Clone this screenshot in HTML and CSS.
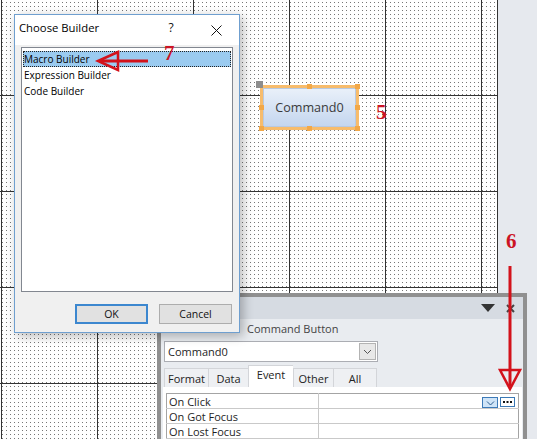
FILE: index.html
```html
<!DOCTYPE html>
<html lang="en">
<head>
<meta charset="utf-8">
<title>Choose Builder</title>
<link rel="stylesheet" href="styles.css">
</head>
<body>
<div class="screen">
  <div class="canvas"></div>

  <div class="ctl">
    <div class="ctl-frame"><div class="ctl-btn">Command0</div></div>
    <span class="move-handle"></span>
    <span class="h h-tm"></span>
    <span class="h h-tr"></span>
    <span class="h h-ml"></span>
    <span class="h h-mr"></span>
    <span class="h h-bl"></span>
    <span class="h h-bm"></span>
    <span class="h h-br"></span>
  </div>

  <div class="props">
    <div class="props-head">
      <svg class="props-menu" width="14" height="8" viewBox="0 0 14 8"><polygon points="0,0 14,0 7,8" fill="#333"/></svg>
      <svg class="props-close" width="9" height="9" viewBox="0 0 9 9"><path d="M1 1 L8 8 M8 1 L1 8" stroke="#444" stroke-width="2"/></svg>
    </div>
    <div class="seltype"><span class="seltype-label"></span>Command Button</div>
    <div class="combo">
      <span class="combo-text">Command0</span>
      <span class="combo-btn"><svg width="9" height="6" viewBox="0 0 9 6"><path d="M1 1 L4.5 4.5 L8 1" fill="none" stroke="#555" stroke-width="1"/></svg></span>
    </div>
    <div class="tabs">
      <span class="tab tab-format">Format</span>
      <span class="tab tab-data">Data</span>
      <span class="tab tab-event active">Event</span>
      <span class="tab tab-other">Other</span>
      <span class="tab tab-all">All</span>
    </div>
    <div class="tabpage">
      <table class="grid">
        <tr>
          <td class="name">On Click</td>
          <td class="value">
            <span class="cell-tools">
              <span class="mini-drop"><svg width="9" height="5" viewBox="0 0 9 5"><path d="M1 0.5 L4.5 4 L8 0.5" fill="none" stroke="#2c5d8f" stroke-width="1"/></svg></span>
              <span class="mini-dots"><svg width="9" height="2" viewBox="0 0 9 2"><rect x="0" y="0" width="2" height="2" fill="#111"/><rect x="3.5" y="0" width="2" height="2" fill="#111"/><rect x="7" y="0" width="2" height="2" fill="#111"/></svg></span>
            </span>
          </td>
        </tr>
        <tr><td class="name">On Got Focus</td><td class="value"></td></tr>
        <tr><td class="name">On Lost Focus</td><td class="value"></td></tr>
      </table>
    </div>
  </div>

  <div class="dialog">
    <div class="dlg-title">
      <span class="dlg-caption">Choose Builder</span>
      <span class="dlg-help">?</span>
      <span class="dlg-close"><svg width="11" height="11" viewBox="0 0 11 11"><path d="M0.5 0.5 L10.5 10.5 M10.5 0.5 L0.5 10.5" stroke="#111" stroke-width="1"/></svg></span>
    </div>
    <div class="dlg-body">
      <div class="listbox">
        <div class="item selected">Macro Builder</div>
        <div class="item">Expression Builder</div>
        <div class="item">Code Builder</div>
      </div>
      <div class="dlg-buttons">
        <button class="btn default">OK</button>
        <button class="btn">Cancel</button>
      </div>
    </div>
  </div>

  <svg class="marks" width="537" height="439" viewBox="0 0 537 439">
    <g fill="none" stroke="#d3121b" stroke-linejoin="miter">
      <line x1="101" y1="61" x2="148" y2="61" stroke-width="3"/>
      <polygon points="98,61 118,52 118,70" stroke-width="2.5"/>
      <line x1="510" y1="266" x2="510" y2="386" stroke-width="3"/>
      <polygon points="500,370 520,370 510,389" stroke-width="2.5"/>
    </g>
    <g class="digits" fill="#cc1424">
      <text x="164" y="60">7</text>
      <text x="376" y="119">5</text>
      <text x="506" y="248">6</text>
    </g>
  </svg>
</div>
</body>
</html>
```

FILE: styles.css
```css
* { box-sizing: border-box; }

html, body {
  margin: 0;
  padding: 0;
}

body {
  width: 537px;
  height: 439px;
  overflow: hidden;
  font-family: "Open Sans", "Noto Sans", sans-serif;
  color: #111;
}

.screen {
  position: relative;
  width: 537px;
  height: 439px;
  overflow: hidden;
  background: #e6e9ee;
}

/* design surface */
.canvas {
  position: absolute;
  left: 0;
  top: 0;
  width: 498px;
  height: 439px;
  border-right: 1px solid #333;
  background-color: #fff;
  background-image:
    linear-gradient(90deg, #333 1px, transparent 1px),
    linear-gradient(#333 1px, transparent 1px),
    conic-gradient(at 1px 1px, transparent 75%, #777 0);
  background-size: 96px 96px, 96px 96px, 4px 4px;
  background-position: 1px 0, 0 95px, 2px 2px;
}

/* command button control on the canvas */
.ctl {
  position: absolute;
  left: 260px;
  top: 85px;
  width: 99px;
  height: 45px;
}

.ctl-frame {
  width: 100%;
  height: 100%;
  border: 3px solid #f7bc6c;
}

.ctl-btn {
  width: 100%;
  height: 100%;
  border: 1px solid #b9c9df;
  background: linear-gradient(#e9f0f9, #c4d6ef);
  color: #3a3a3a;
  font-size: 12.6px;
  display: flex;
  align-items: center;
  justify-content: center;
}

.move-handle {
  position: absolute;
  left: -4px;
  top: -4px;
  width: 7px;
  height: 7px;
  background: #8d8d8d;
}

.h {
  position: absolute;
  width: 5px;
  height: 5px;
  background: #f2a848;
}
.h-tm { left: 47px; top: -1px; }
.h-tr { left: 95px; top: -1px; }
.h-ml { left: -1px; top: 20px; }
.h-mr { left: 95px; top: 20px; }
.h-bl { left: -1px; top: 41px; }
.h-bm { left: 47px; top: 41px; }
.h-br { left: 95px; top: 41px; }

/* property sheet */
.props {
  position: absolute;
  left: 157px;
  top: 293px;
  width: 370px;
  height: 160px;
  border: 4px solid #909090;
  border-bottom: 0;
  background: #e9ecf0;
  font-size: 11px;
  color: #1e1e1e;
}

.props-head {
  height: 22px;
  background: #d6dbe2;
  display: flex;
  align-items: center;
  padding: 0 8px 0 2px;
}

.props-menu { margin-left: auto; margin-right: 11px; }

.seltype {
  height: 22px;
  line-height: 20px;
  padding-left: 2px;
  color: #444;
}

.seltype-label {
  display: inline-block;
  width: 84px;
}

.combo {
  margin-left: 3px;
  width: 214px;
  height: 21px;
  border: 1px solid #abadb3;
  background: #fff;
  display: flex;
  align-items: center;
}

.combo-text {
  flex: 1;
  padding-left: 3px;
}

.combo-btn {
  width: 17px;
  height: 17px;
  margin-right: 1px;
  border: 1px solid #b3b3b3;
  background: #e8e8e8;
  display: flex;
  align-items: center;
  justify-content: center;
}

.tabs {
  display: flex;
  align-items: flex-end;
  margin: 6px 0 0 3px;
  height: 19px;
}

.tab {
  height: 19px;
  border: 1px solid #d3d5d9;
  border-bottom: 0;
  border-right: 0;
  background: #eef0f3;
  display: flex;
  align-items: center;
  justify-content: center;
  color: #222;
}
.tab-format { width: 44px; }
.tab-data { width: 40px; }
.tab-event { width: 45px; }
.tab-other { width: 40px; }
.tab-all { width: 44px; border-right: 1px solid #d3d5d9; }

.tab.active {
  height: 22px;
  background: #fff;
  align-items: flex-start;
  padding-top: 1px;
}

.tabpage {
  margin: 0 1px 0 2px;
  height: 60px;
  background: #fff;
  padding: 6px 0 0 3px;
}

.grid {
  border-collapse: collapse;
  width: 353px;
  table-layout: fixed;
}

.grid td {
  height: 15px;
  padding: 0 0 0 2px;
  border: 1px solid #c9c9c9;
  line-height: 13px;
  white-space: nowrap;
  vertical-align: middle;
}

.grid tr:first-child td { border-top-color: #a4a4a4; }
.grid td.name { width: 152px; border-left-color: #a4a4a4; }
.grid td.value { border-right-color: #a4a4a4; padding: 0 3px 0 0; text-align: right; }

.cell-tools {
  display: inline-flex;
  align-items: center;
  gap: 2px;
  vertical-align: middle;
}

.mini-drop {
  width: 16px;
  height: 11px;
  border: 1px solid #3d7ab8;
  background: #cfe4f7;
  display: flex;
  align-items: flex-end;
  justify-content: center;
  padding-bottom: 1px;
}

.mini-dots {
  width: 15px;
  height: 10px;
  border: 1px solid #3a78b5;
  background: #fff;
  display: flex;
  align-items: center;
  justify-content: center;
}

/* Choose Builder dialog */
.dialog {
  position: absolute;
  left: 14px;
  top: 14px;
  width: 226px;
  height: 319px;
  border: 1px solid #6f9fcf;
  background: #f0f0f0;
  box-shadow: 3px 3px 10px rgba(0, 0, 0, 0.28);
  display: flex;
  flex-direction: column;
}

.dlg-title {
  height: 30px;
  background: #fff;
  display: flex;
  align-items: center;
  padding-left: 4px;
}

.dlg-caption {
  flex: 1;
  font-size: 11.3px;
  color: #000;
  margin-bottom: 6px;
}

.dlg-help {
  width: 46px;
  text-align: center;
  font-size: 12px;
  margin-bottom: 6px;
}

.dlg-close {
  width: 45px;
  height: 30px;
  display: flex;
  align-items: center;
  justify-content: center;
}

.dlg-body {
  flex: 1;
  padding: 2px 6px 8px 6px;
  display: flex;
  flex-direction: column;
}

.listbox {
  height: 245px;
  border: 1px solid #828790;
  background: #fff;
  padding: 3px 1px;
  font-size: 10px;
}

.item {
  height: 16px;
  line-height: 17px;
  padding-left: 1px;
  color: #000;
}

.item.selected {
  background: #9bcbf0;
  outline: 1px dotted #222;
  outline-offset: -1px;
}

.dlg-buttons {
  display: flex;
  justify-content: flex-end;
  gap: 11px;
  margin-top: 12px;
  padding-right: 1px;
}

.btn {
  width: 73px;
  height: 20px;
  border: 1px solid #adadad;
  background: #e1e1e1;
  font-family: "Open Sans", "Noto Sans", sans-serif;
  font-size: 10.5px;
  color: #111;
  padding: 0;
}

.btn.default {
  border: 2px solid #3c87cf;
}

/* annotation overlay */
.marks {
  position: absolute;
  left: 0;
  top: 0;
  pointer-events: none;
}

.digits text {
  font-family: "Liberation Serif", serif;
  font-weight: bold;
  font-size: 21px;
}
```
